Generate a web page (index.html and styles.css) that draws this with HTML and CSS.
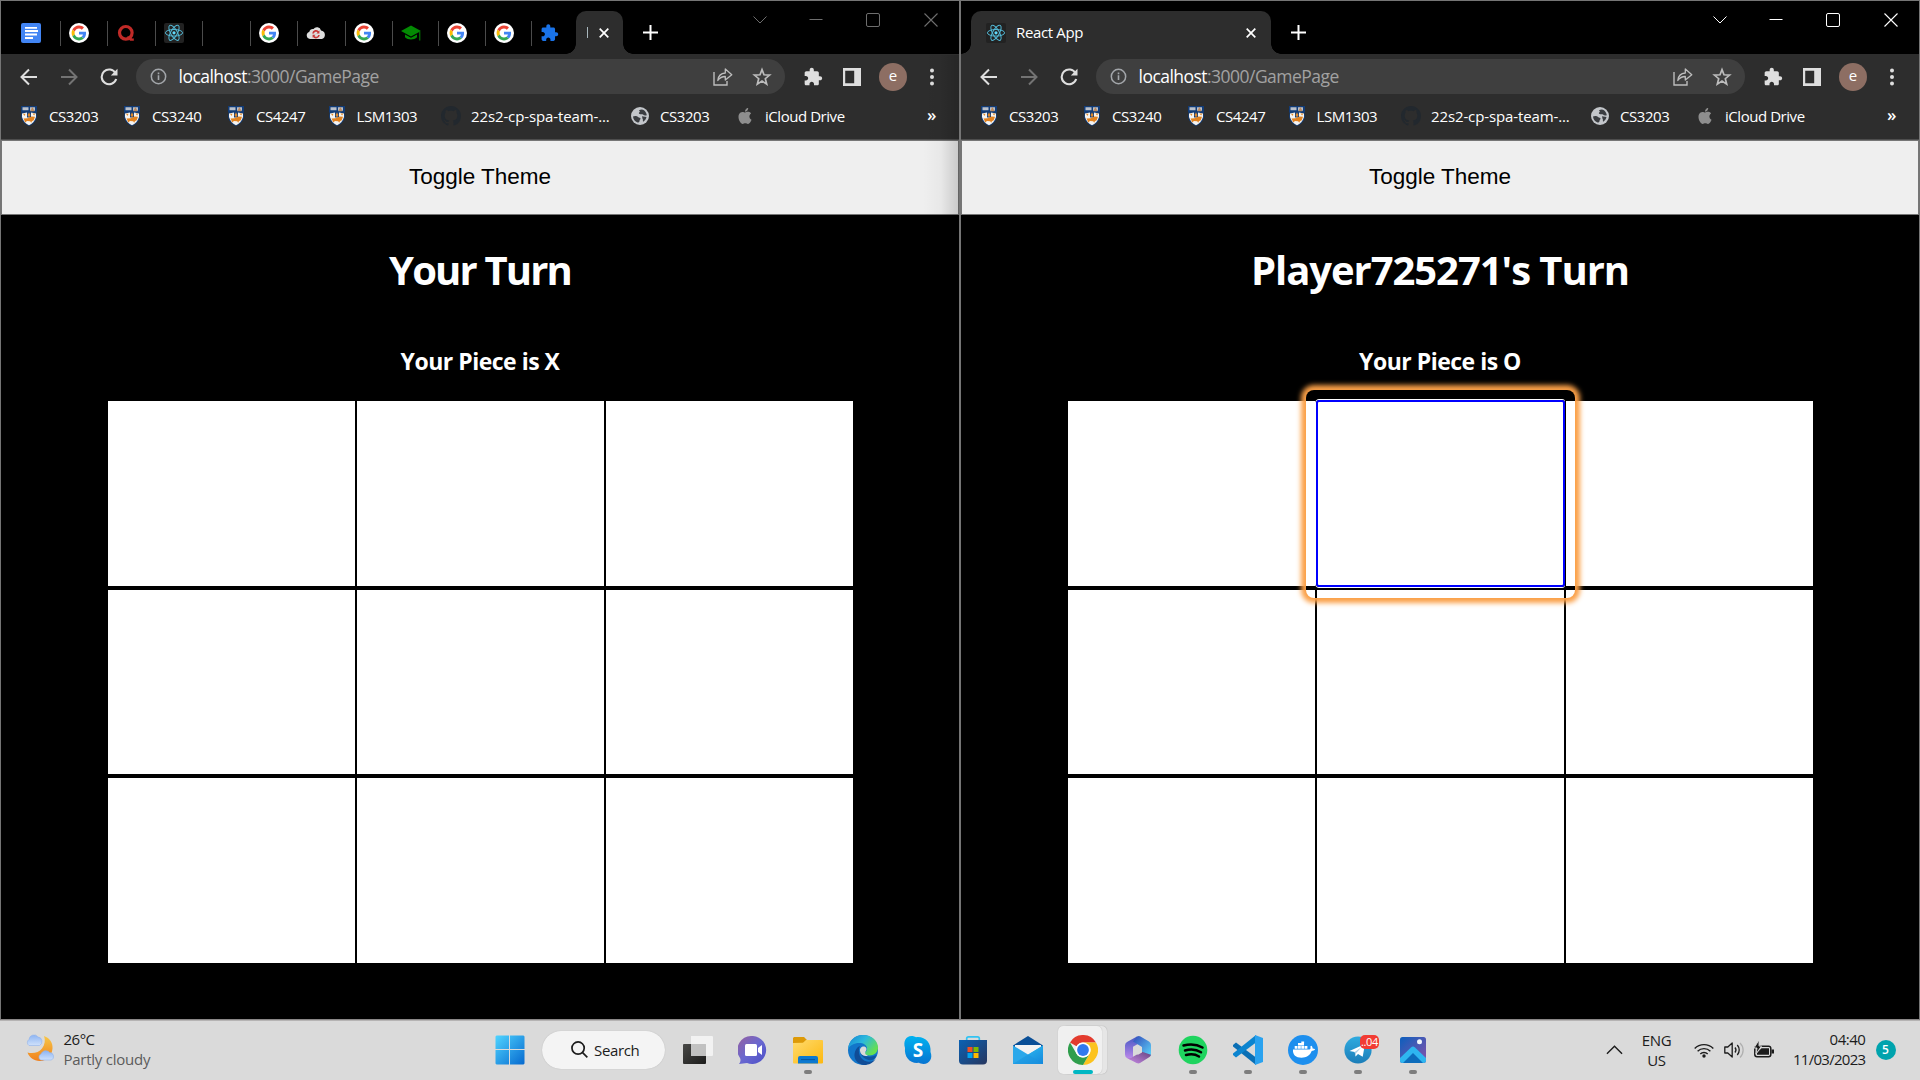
FILE: index.html
```html
<!DOCTYPE html>
<html lang="en">
<head>
<meta charset="utf-8">
<title>React App</title>
<link rel="stylesheet" href="styles.css">
</head>
<body>
<svg class="sprite" aria-hidden="true">
  <defs>
    <linearGradient id="gWin" x1="0" y1="0" x2="1" y2="1"><stop offset="0" stop-color="#4fd4ff"/><stop offset="1" stop-color="#0669cf"/></linearGradient>
    <linearGradient id="gChat" x1="0" y1="0" x2="1" y2="1"><stop offset="0" stop-color="#96609f"/><stop offset=".5" stop-color="#6a68d0"/><stop offset="1" stop-color="#4c4fc8"/></linearGradient>
    <linearGradient id="gFold" x1="0" y1="0" x2="1" y2="1"><stop offset="0" stop-color="#ffdb6e"/><stop offset="1" stop-color="#fdb80f"/></linearGradient>
    <linearGradient id="gEdge" x1="0" y1="0" x2="1" y2=".6"><stop offset="0" stop-color="#1583d3"/><stop offset=".5" stop-color="#2cb9dd"/><stop offset="1" stop-color="#66e04d"/></linearGradient>
    <linearGradient id="gBlue" x1="0" y1="0" x2="0" y2="1"><stop offset="0" stop-color="#00b2f0"/><stop offset="1" stop-color="#0874d1"/></linearGradient>
    <linearGradient id="gStore" x1="0" y1="0" x2="1" y2="1"><stop offset="0" stop-color="#0a62b4"/><stop offset="1" stop-color="#27365f"/></linearGradient>
    <linearGradient id="gMail" x1="0" y1="0" x2="1" y2="1"><stop offset="0" stop-color="#35c6f5"/><stop offset="1" stop-color="#1488dc"/></linearGradient>
    <linearGradient id="gTask" x1="0" y1="0" x2="1" y2="1"><stop offset="0" stop-color="#484846"/><stop offset="1" stop-color="#1c1c1b"/></linearGradient>
    <linearGradient id="gPhoto" x1="0" y1="0" x2="1" y2="1"><stop offset="0" stop-color="#0b5fbd"/><stop offset="1" stop-color="#8a52aa"/></linearGradient>
    <linearGradient id="gMoon" x1="0" y1="0" x2="0" y2="1"><stop offset="0" stop-color="#f7c748"/><stop offset="1" stop-color="#f0801d"/></linearGradient>
    <linearGradient id="gCloud" x1="0" y1="0" x2="0" y2="1"><stop offset="0" stop-color="#8db4f2"/><stop offset="1" stop-color="#cfe1fb"/></linearGradient>
    <linearGradient id="gTg" x1="0" y1="0" x2="0" y2="1"><stop offset="0" stop-color="#2fabe0"/><stop offset="1" stop-color="#1b7db8"/></linearGradient>
    <linearGradient id="gM1" x1="0" y1="0" x2="0" y2="1"><stop offset="0" stop-color="#4458c4"/><stop offset="1" stop-color="#c48bec"/></linearGradient>
    <linearGradient id="gM2" x1="0" y1="0" x2="1" y2="1"><stop offset="0" stop-color="#3149b9"/><stop offset="1" stop-color="#5fd6fb"/></linearGradient>
    <linearGradient id="gM3" x1="0" y1="1" x2="1" y2="0"><stop offset="0" stop-color="#c98be8"/><stop offset="1" stop-color="#66437f"/></linearGradient>
  </defs>
  <symbol id="docs" viewBox="0 0 20 20"><rect width="20" height="20" rx="2" fill="#4285f4"/><path d="M4 4.8h12M4 8h13M4 11.5h12M4 15h8" stroke="#fff" stroke-width="1.8"/></symbol>
  <symbol id="google" viewBox="0 0 20 20"><circle cx="10" cy="10" r="10" fill="#fff"/><g transform="translate(2.6 2.6) scale(.308)"><path fill="#EA4335" d="M24 9.5c3.54 0 6.71 1.22 9.21 3.6l6.85-6.85C35.9 2.38 30.47 0 24 0 14.62 0 6.51 5.38 2.56 13.22l7.98 6.19C12.43 13.72 17.74 9.5 24 9.5z"/><path fill="#4285F4" d="M46.98 24.55c0-1.57-.15-3.09-.38-4.55H24v9.02h12.94c-.58 2.96-2.26 5.48-4.78 7.18l7.73 6c4.51-4.18 7.09-10.36 7.09-17.65z"/><path fill="#FBBC05" d="M10.53 28.59c-.48-1.45-.76-2.99-.76-4.59s.27-3.14.76-4.59l-7.98-6.19C.92 16.46 0 20.12 0 24c0 3.88.92 7.54 2.56 10.78l7.97-6.19z"/><path fill="#34A853" d="M24 48c6.48 0 11.93-2.13 15.89-5.81l-7.73-6c-2.15 1.45-4.92 2.3-8.16 2.3-6.26 0-11.57-4.22-13.47-9.91l-7.98 6.19C6.51 42.62 14.62 48 24 48z"/></g></symbol>
  <symbol id="quora" viewBox="0 0 20 20"><circle cx="9.8" cy="9.8" r="6.3" fill="none" stroke="#c02a27" stroke-width="3.2"/><path d="M11 13.500l3 4.300h3.800v-2.600c-2 .6-2.500 0-3.800-2z" fill="#c02a27"/></symbol>
  <symbol id="react" viewBox="0 0 20 20"><rect width="20" height="20" rx="2" fill="#222"/><g fill="none" stroke="#53b9d6" stroke-width="1"><ellipse cx="10" cy="9.800" rx="8.600" ry="3.300"/><ellipse cx="10" cy="9.800" rx="8.600" ry="3.300" transform="rotate(60 10 9.800)"/><ellipse cx="10" cy="9.800" rx="8.600" ry="3.300" transform="rotate(120 10 9.800)"/></g><circle cx="10" cy="9.800" r="1.600" fill="#61dafb"/></symbol>
  <symbol id="cloudsync" viewBox="0 0 20 20"><path d="M4 16a3.600 3.600 0 0 1-.8-7A4 4 0 0 1 7.500 6a4.200 4.200 0 0 1 7.500 1.500 4.400 4.400 0 0 1 1 8.500z" fill="#dedede"/><path d="M7 10.500a3 3 0 0 1 5.500-1.300M13 12a3 3 0 0 1-5.500 1.200" fill="none" stroke="#c93a3a" stroke-width="1.700"/><path d="M13.400 7.500v3h-3zM6.600 14.800v-3h3z" fill="#c93a3a"/></symbol>
  <symbol id="cap" viewBox="0 0 20 20"><path d="M0 8l10-5.500L20 8l-10 5.500zM4 11.500l6 3.300 6-3.300v2.800c-3 3-9 3-12 0zM18.300 9h1v8.500h-1z" fill="#038a03"/></symbol>
  <symbol id="puzzle" viewBox="0 0 24 24"><path fill="currentColor" d="M20.5 11H19V7c0-1.1-.9-2-2-2h-4V3.500C13 2.120 11.880 1 10.500 1S8 2.120 8 3.500V5H4c-1.100 0-1.990.9-1.990 2v3.800H3.500c1.490 0 2.700 1.210 2.700 2.700s-1.210 2.700-2.700 2.700H2V20c0 1.100.9 2 2 2h3.800v-1.500c0-1.490 1.210-2.700 2.700-2.700s2.700 1.210 2.700 2.700V22H17c1.100 0 2-.9 2-2v-4h1.500c1.380 0 2.500-1.120 2.500-2.500S21.880 11 20.500 11z"/></symbol>
  <symbol id="x" viewBox="0 0 10 10"><path d="M.7.7l8.600 8.600M9.300.7L.7 9.300" stroke="#fff" stroke-width="1.700"/></symbol>
  <symbol id="plus" viewBox="0 0 15 15"><path d="M7.500 0v15M0 7.500h15" stroke="#fff" stroke-width="2"/></symbol>
  <symbol id="wchev" viewBox="0 0 14 14"><path d="M.5 3.500L7 10l6.500-6.500" fill="none" stroke="currentColor"/></symbol>
  <symbol id="wmin" viewBox="0 0 14 14"><path d="M.5 6.500h13" stroke="currentColor"/></symbol>
  <symbol id="wmax" viewBox="0 0 14 14"><rect x=".5" y=".5" width="13" height="13" rx="1.500" fill="none" stroke="currentColor"/></symbol>
  <symbol id="wclose" viewBox="0 0 14 14"><path d="M.5.5l13 13M13.500.5l-13 13" stroke="currentColor" stroke-width="1.100"/></symbol>
  <symbol id="back" viewBox="0 0 18 18"><path d="M17 9H2M9 1.500L1.500 9 9 16.500" fill="none" stroke="currentColor" stroke-width="2"/></symbol>
  <symbol id="reload" viewBox="0 0 18 18"><path d="M15.600 5.300A7.400 7.400 0 1 0 16.200 11" fill="none" stroke="#dedede" stroke-width="2.100"/><path d="M17.500.8v6.700h-6.700z" fill="#dedede"/></symbol>
  <symbol id="info" viewBox="0 0 18 18"><circle cx="9" cy="9" r="7.600" fill="none" stroke="#a3a6aa" stroke-width="1.600"/><path d="M9 7.800v5M9 4.700v1.800" stroke="#a3a6aa" stroke-width="1.700"/></symbol>
  <symbol id="share" viewBox="0 0 20 19"><path d="M1 5v13h13v-4" fill="none" stroke="#bdbdbd" stroke-width="1.400"/><path d="M4.800 13.500c.5-5 3.500-7.300 7.500-7.500V2l6.500 5.700-6.500 5.300V9.500c-3.500 0-5.500 1-7.500 4z" fill="none" stroke="#bdbdbd" stroke-width="1.300" stroke-linejoin="round"/></symbol>
  <symbol id="star" viewBox="0 0 20 20"><path d="M10 2.600l2 5.200 5.600.3-4.300 3.600 1.400 5.400L10 14.100l-4.700 3 1.400-5.400-4.300-3.600 5.600-.3z" fill="none" stroke="#bdbdbd" stroke-width="1.700"/></symbol>
  <symbol id="panel" viewBox="0 0 18 18"><path fill="#dedede" fill-rule="evenodd" d="M0 0h18v18H0zM2.200 2.800h9v12.400h-9z"/></symbol>
  <symbol id="dots" viewBox="0 0 4 18"><g fill="#dedede"><circle cx="2" cy="2.500" r="2"/><circle cx="2" cy="9" r="2"/><circle cx="2" cy="15.500" r="2"/></g></symbol>
  <symbol id="crest" viewBox="0 0 18 20"><path d="M1 0h16v6c-1 1-.5 2 0 4-.5 5-4 8.500-8 10-4-1.500-7.500-5-8-10 .5-2 1-3 0-4z" fill="#123c77"/><path d="M2.500 1.300h6v3h-6zM10 1.300h5v3.500h-5z" fill="#b9c0cb"/><path d="M12.400.7l2.200 4.500h-4.300z" fill="#bd8a5d"/><path d="M2 7.500l5-1h4l5 1V11c-1 4-4 7-7 8.300C6 18 3 15 2 11z" fill="#f4f3f1"/><path d="M7 6h4v5.500H7z" fill="#173e77"/><path d="M9 6.500l1.500 2.500L9 11.500 7.500 9z" fill="#e08a2c"/><path d="M3 7.800h2.500L4.500 10zM12.500 7.600h2.800l-1.200 2z" fill="#e08a2c"/><path d="M3.500 12.500l4-.2 4-1.800 3.500.2-1.300 3.500-1.800 1-.7 1.600-1-1.600-3.200-.3-2 1.500-.5-2z" fill="#e2821f"/></symbol>
  <symbol id="github" viewBox="0 0 16 16"><path fill="#22282e" d="M8 0C3.580 0 0 3.580 0 8c0 3.540 2.290 6.530 5.470 7.590.4.070.55-.17.55-.38 0-.19-.01-.82-.01-1.490-2.010.37-2.530-.49-2.690-.94-.09-.23-.48-.94-.82-1.130-.28-.15-.68-.52-.01-.53.63-.01 1.080.58 1.230.82.72 1.210 1.870.87 2.330.66.07-.52.28-.87.51-1.070-1.780-.2-3.640-.89-3.640-3.950 0-.87.31-1.590.82-2.150-.08-.2-.36-1.020.08-2.120 0 0 .67-.21 2.200.82.64-.18 1.320-.27 2-.27s1.360.09 2 .27c1.530-1.040 2.200-.82 2.200-.82.44 1.100.16 1.920.08 2.120.51.56.82 1.270.82 2.150 0 3.070-1.870 3.750-3.650 3.950.29.25.54.73.54 1.480 0 1.070-.01 1.930-.01 2.200 0 .21.15.46.55.38A8.010 8.010 0 0 0 16 8c0-4.420-3.580-8-8-8z"/></symbol>
  <symbol id="globe" viewBox="0 0 18 18"><circle cx="9" cy="9" r="9" fill="#c3c6ca"/><path d="M2 9.500c2-1 4-.5 5 .5s2.500.5 2.500 1.500-1 1.300-1 2.500-1 1.500-2 1.500C4 14.500 2.200 12.500 2 9.500zM8 3.200c2-1.200 4-.9 5 0 1.500 1.300 2.500 3 2.800 5-1.600.5-2.800.4-3.800-.6s-2.500 0-3.500-.5-.9-1.800.5-2zM11 9.200l4.500.8c-.5 2-1.500 3.500-3.300 4.700-.8-1.200.3-2-.7-3z" fill="#3a3d41"/></symbol>
  <symbol id="apple" viewBox="0 0 24 24"><path fill="#8e8e8e" d="M12.152 6.896c-.948 0-2.415-1.078-3.960-1.040-2.040.027-3.910 1.183-4.961 3.014-2.117 3.675-.546 9.103 1.519 12.090 1.013 1.454 2.208 3.090 3.792 3.039 1.520-.065 2.090-.987 3.935-.987 1.831 0 2.350.987 3.960.948 1.637-.026 2.676-1.480 3.676-2.948 1.156-1.688 1.636-3.325 1.662-3.415-.039-.013-3.182-1.221-3.220-4.857-.026-3.040 2.480-4.494 2.597-4.559-1.429-2.090-3.623-2.324-4.390-2.376-2-.156-3.675 1.090-4.610 1.090zM15.530 3.830c.843-1.012 1.400-2.427 1.245-3.830-1.207.052-2.662.805-3.532 1.818-.78.896-1.454 2.338-1.273 3.714 1.338.104 2.715-.688 3.559-1.701"/></symbol>
  <symbol id="weather" viewBox="0 0 30 28"><path d="M19 2c6 2 9 7 8.500 12.500C27 22 21 27.500 14.500 27 9 27 4 23 2.500 18.500 8 20 14 18.500 17 14.500S20.500 6 19 2z" fill="url(#gMoon)"/><path d="M4 11.500a3.600 3.600 0 0 1 0-6A5 5 0 0 1 13 3a4.500 4.500 0 0 1 1.500 8.500z" fill="url(#gCloud)" stroke="#8fb2ec" stroke-width=".6"/><path d="M15.500 26a3.400 3.400 0 0 1 .5-6 5 5 0 0 1 8.500-1.500 4 4 0 0 1 2 7.500z" fill="url(#gCloud)" stroke="#8fb2ec" stroke-width=".6"/></symbol>
  <symbol id="start" viewBox="0 0 30 30"><path d="M1.500.5H14V14H.5V1.500zM15 .5h13.500l1 1V14H15zM.5 15H14v14.500H1.500l-1-1zM15 15h14.500v13.500l-1 1H15z" fill="url(#gWin)"/></symbol>
  <symbol id="mag" viewBox="0 0 18 18"><circle cx="7.500" cy="7.500" r="6.500" fill="none" stroke="#1c1c1c" stroke-width="1.800"/><path d="M12.300 12.300l5 5" stroke="#1c1c1c" stroke-width="1.800"/></symbol>
  <symbol id="taskview" viewBox="0 0 30 30"><rect y="9" width="23" height="20" rx="1" fill="url(#gTask)"/><path d="M8 1h21a1 1 0 0 1 1 1v18a1 1 0 0 1-1 1H8z" fill="#f8f8f8" fill-opacity=".8"/><path d="M8 9h15v12H8z" fill="#b7b7b7" fill-opacity=".6"/></symbol>
  <symbol id="chat" viewBox="0 0 30 30"><path d="M15 1a14 14 0 1 1-6 27L1 29c1.500-2 2-4 1-6A14 14 0 0 1 15 1z" fill="url(#gChat)"/><rect x="7" y="9" width="12" height="12" rx="1.500" fill="#fff"/><path d="M20 13l4-3v10l-4-3z" fill="#fff"/></symbol>
  <symbol id="folder" viewBox="0 0 30 30"><path d="M1 2h10l3 3h14v8H0V3z" fill="#dd9a08"/><path d="M0 8l10-.3L13 5h16a1 1 0 0 1 1 1v21.500a1 1 0 0 1-1 1H1a1 1 0 0 1-1-1z" fill="url(#gFold)"/><path d="M5 28.500V23a2 2 0 0 1 2-2h16a2 2 0 0 1 2 2v5.500z" fill="#0d79d0"/><path d="M8 24.600h14" stroke="#09559e"/></symbol>
  <symbol id="edge" viewBox="0 0 30 30"><circle cx="15" cy="15" r="15" fill="#1276ca"/><path d="M0 14C1 5 7 0 15 0c9 0 15 6 15 12.500 0 5-4 8-8.500 8-3 0-4.800-1-4.800-2.200 0-1 2.300-1.500 2.300-4.800 0-3.500-3.500-5.500-8-5.500-5 0-9 2.500-11 6z" fill="url(#gEdge)"/><path d="M12 11c-3 6 0 14 7 15.500 4 .8 7-.5 9-3C25 28 21 30 16 30c-7-1-10-6-9.500-11C7 15 9 12 12 11z" fill="#104d97"/><path d="M13 12c-1.500 3-.5 6 2 8 3 2 7 2 11 1l2.500-1-1.500 3c-2 2.300-5 2.700-8 1.500-6-2-8-8-6-12.500z" fill="#0f549f"/><path d="M12 16c-.5-3 2-5 4.500-4.500 2 .5 2.500 2.500 1.500 4.200-1.500 2.300-1 3.800 2 4.700-4 1.500-7.500-.5-8-4.400z" fill="#dadada"/></symbol>
  <symbol id="skype" viewBox="0 0 30 30"><path d="M8.500 1c2 0 3.500.7 4.500 1.200C22 1 28.500 8 27.500 17c2.500 6-1 12-7 12-2 0-3.500-.5-4.500-1.200C7 29 1 22 2 13 0 6 3 1 8.500 1z" fill="url(#gBlue)"/><text x="15" y="21.500" text-anchor="middle" font-family="Open Sans, sans-serif" font-weight="700" font-size="19" fill="#fff">S</text></symbol>
  <symbol id="store" viewBox="0 0 30 30"><path d="M8.700 7V3.500c0-1 .6-1.700 1.700-1.700h9.200c1.100 0 1.700.7 1.700 1.700V7" fill="none" stroke="#33c3f2" stroke-width="1.700"/><path d="M1 5h28v20.500a4 4 0 0 1-4 4H5a4 4 0 0 1-4-4z" fill="url(#gStore)"/><path d="M9.500 12h5v5h-5z" fill="#f25022"/><path d="M15.500 12h5v5h-5z" fill="#7fba00"/><path d="M9.500 18h5v5h-5z" fill="#00a4ef"/><path d="M15.500 18h5v5h-5z" fill="#ffb900"/></symbol>
  <symbol id="mail" viewBox="0 0 30 30"><path d="M0 10.500L15 1l15 9.500V16H0z" fill="#0a4f97"/><path d="M2 10h26v8L15 25 2 18z" fill="#f3f3f3"/><path d="M0 10.500l15 9 15-9V29H0z" fill="#2ba8ea"/><path d="M0 29l30-18.500V29z" fill="url(#gMail)"/><path d="M15 19.500L30 29H0z" fill="#1c93e0" opacity=".5"/></symbol>
  <symbol id="chrome" viewBox="0 0 30 30"><path d="M2 7.500A15 15 0 0 1 28 7.500H15a7.500 7.500 0 0 0-6.500 3.800z" fill="#e33b2e"/><path d="M28 7.500A15 15 0 0 1 15 30l6.500-11.300A7.500 7.500 0 0 0 21 10l-6-2.500z" fill="#fcc31e"/><path d="M2 7.500A15 15 0 0 0 15 30l6.500-11.300a7.500 7.500 0 0 1-13 0z" fill="#2f9e4c"/><circle cx="15" cy="15" r="7.500" fill="#fff"/><circle cx="15" cy="15" r="5.900" fill="#3079ee"/></symbol>
  <symbol id="m365" viewBox="0 0 30 30"><path d="M14 1.500L4 7q-2 1.200-2 3.500v9q0 2.300 2 3.500l4 2.200q2-1.200 2-3.500v-10l7-4z" fill="url(#gM1)"/><path d="M14 1.500q2-.8 3.500 0L26 6.500q2 1.200 2 3.500v9.500q0 1.500-1.500 2L19 17v-5L10 6.500z" fill="url(#gM2)"/><path d="M26.500 22L17 28q-1.500.8-3.500 0L4 23q3.500 1 6-1.300l9-5 9 3q-.3 1.500-1.500 2.300z" fill="url(#gM3)"/><path d="M15 10.500l4 2.300v4.600l-4 2.300-4-2.300v-4.600z" fill="#dadada"/></symbol>
  <symbol id="spotify" viewBox="0 0 30 30"><circle cx="15" cy="15" r="14.300" fill="#1fd45f"/><path d="M5.500 10.500c6.500-1.800 13.500-1.200 19 2M7 15.500c5.500-1.500 11.500-1 16 1.800M8 20c4.500-1.200 9.500-.8 13 1.500" fill="none" stroke="#000" stroke-width="2.500" stroke-linecap="round"/></symbol>
  <symbol id="vscode" viewBox="0 0 30 30"><path d="M0 10l3-2.500 20 15V30L0 11.500z" fill="#0a6fb5"/><path d="M0 20l3 2.500 20-15V0L0 18.500z" fill="#0b84cf"/><path d="M22 0l8 3v24l-8 3z" fill="#2aa2ef"/></symbol>
  <symbol id="docker" viewBox="0 0 30 30"><circle cx="15" cy="15" r="15" fill="#1d8fee"/><path d="M5 14.500h16.500c1.500-.3 1-2 .8-3l1-.7c1 .8 1.300 1.700 1.300 2.700 1 0 2 .2 2.600.8-.8 1.300-2 1.700-3.500 1.700C22 20.500 18.500 22.700 13.500 22.700 8 22.700 4.500 20 5 14.500z" fill="#fff"/><path d="M6.700 11h2.800v2.800H6.700zM10 11h2.800v2.800H10zM13.300 11h2.800v2.800h-2.800zM16.600 11h2.800v2.800h-2.800zM10 8h6v2.500h-6zM13.300 6.500h2.800v2h-2.800z" fill="#fff"/></symbol>
  <symbol id="telegram" viewBox="0 0 30 30"><circle cx="15" cy="15" r="13.600" fill="url(#gTg)"/><path d="M6.500 16L22 9l-2.300 12.800L15 19l-2.500 2.500-.8-4.500z" fill="#fff"/><path d="M11.700 17l7-5-5.500 6-.7 3.500z" fill="#a9cfe5"/></symbol>
  <symbol id="photos" viewBox="0 0 30 30"><rect x="2" y="2" width="26" height="26" rx="2.500" fill="url(#gPhoto)"/><circle cx="21.500" cy="6.800" r="2.500" fill="#f1f6fc"/><path d="M2 23l11-10.500q2-1.800 4 0L28 23v2.500a2.500 2.500 0 0 1-2.500 2.500h-21A2.500 2.500 0 0 1 2 25.500z" fill="#2eb6f0"/><path d="M5 28l10-10 10 10z" fill="#0d6cbb"/></symbol>
  <symbol id="up" viewBox="0 0 18 10"><path d="M1 9l8-8 8 8" fill="none" stroke="#1c1c1c" stroke-width="1.500"/></symbol>
  <symbol id="wifi" viewBox="0 0 20 16"><g fill="none" stroke="#1c1c1c" stroke-width="1.400"><path d="M.7 6.500a13 13 0 0 1 18.600 0M3.600 9.300a9 9 0 0 1 12.800 0M6.300 12a5.300 5.300 0 0 1 7.400 0"/></g><circle cx="10" cy="14" r="1.700" fill="#1c1c1c"/></symbol>
  <symbol id="sound" viewBox="0 0 20 18"><g fill="none" stroke="#1c1c1c" stroke-width="1.300"><path d="M.8 6v6h3l4.400 4V2L3.800 6z" stroke-linejoin="round"/><path d="M11 6.500a4 4 0 0 1 0 5M13.300 4a7.500 7.500 0 0 1 0 10"/><path d="M16 2a10 10 0 0 1 0 14.500" stroke="#b0b0b0"/></g></symbol>
  <symbol id="battery" viewBox="0 0 20 18"><rect x=".8" y="5.300" width="16" height="10.500" rx="2.200" fill="none" stroke="#1c1c1c" stroke-width="1.500"/><path d="M7.500 7.300H15v6.500H3v-2z" fill="#1c1c1c"/><path d="M17.500 8.500H20v4h-2.500z" fill="#1c1c1c"/><path d="M5-1L0 7h3l-1 6 5.500-8H5z" fill="#1c1c1c" stroke="#dadada" stroke-width=".9"/></symbol>
</svg>

<div class="desktop">
  <section class="window inactive">
    <header class="tabstrip">
      <div class="tabs">
        <div class="tab"><svg><use href="#docs"/></svg></div>
        <div class="tab"><svg><use href="#google"/></svg></div>
        <div class="tab"><svg><use href="#quora"/></svg></div>
        <div class="tab"><svg><use href="#react"/></svg></div>
        <div class="tab"></div>
        <div class="tab"><svg><use href="#google"/></svg></div>
        <div class="tab"><svg><use href="#cloudsync"/></svg></div>
        <div class="tab"><svg><use href="#google"/></svg></div>
        <div class="tab tight"><svg><use href="#cap"/></svg></div>
        <div class="tab tight"><svg><use href="#google"/></svg></div>
        <div class="tab tight"><svg><use href="#google"/></svg></div>
        <div class="tab last"><svg class="ext"><use href="#puzzle"/></svg></div>
      </div>
      <div class="active-tab narrow"><i class="sliver"></i><svg class="x"><use href="#x"/></svg></div>
      <svg class="plus"><use href="#plus"/></svg>
      <div class="controls"><span class="c-chev"><svg><use href="#wchev"/></svg></span><span><svg><use href="#wmin"/></svg></span><span><svg><use href="#wmax"/></svg></span><span><svg><use href="#wclose"/></svg></span></div>
    </header>
    <nav class="toolbar">
      <span class="nav"><svg><use href="#back"/></svg></span>
      <span class="nav fwd"><svg><use href="#back"/></svg></span>
      <span class="nav"><svg><use href="#reload"/></svg></span>
      <div class="omnibox"><svg class="info"><use href="#info"/></svg><span class="url">localhost<em>:3000/GamePage</em></span><svg class="share"><use href="#share"/></svg><svg class="star"><use href="#star"/></svg></div>
      <svg class="pz"><use href="#puzzle"/></svg><svg class="panel"><use href="#panel"/></svg><span class="avatar">e</span><svg class="dots"><use href="#dots"/></svg>
    </nav>
    <nav class="bookmarks">
      <a><svg class="crest"><use href="#crest"/></svg>CS3203</a><a><svg class="crest"><use href="#crest"/></svg>CS3240</a><a><svg class="crest"><use href="#crest"/></svg>CS4247</a><a class="lsm"><svg class="crest"><use href="#crest"/></svg>LSM1303</a><a class="gh"><svg><use href="#github"/></svg>22s2-cp-spa-team-...</a><a><svg class="globe"><use href="#globe"/></svg>CS3203</a><a><svg class="apple"><use href="#apple"/></svg>iCloud Drive</a><b>»</b>
    </nav>
    <main>
      <button class="theme">Toggle Theme</button>
      <h1>Your Turn</h1>
      <h3>Your Piece is X</h3>
      <div class="board"><i></i><i></i><i></i><i></i><i></i><i></i><i></i><i></i><i></i></div>
    </main>
  </section>

  <section class="window">
    <header class="tabstrip">
      <div class="active-tab wide"><svg class="fav"><use href="#react"/></svg><span class="tab-title">React App</span><svg class="x"><use href="#x"/></svg></div>
      <svg class="plus"><use href="#plus"/></svg>
      <div class="controls"><span class="c-chev"><svg><use href="#wchev"/></svg></span><span><svg><use href="#wmin"/></svg></span><span><svg><use href="#wmax"/></svg></span><span><svg><use href="#wclose"/></svg></span></div>
    </header>
    <nav class="toolbar">
      <span class="nav"><svg><use href="#back"/></svg></span>
      <span class="nav fwd"><svg><use href="#back"/></svg></span>
      <span class="nav"><svg><use href="#reload"/></svg></span>
      <div class="omnibox"><svg class="info"><use href="#info"/></svg><span class="url">localhost<em>:3000/GamePage</em></span><svg class="share"><use href="#share"/></svg><svg class="star"><use href="#star"/></svg></div>
      <svg class="pz"><use href="#puzzle"/></svg><svg class="panel"><use href="#panel"/></svg><span class="avatar">e</span><svg class="dots"><use href="#dots"/></svg>
    </nav>
    <nav class="bookmarks">
      <a><svg class="crest"><use href="#crest"/></svg>CS3203</a><a><svg class="crest"><use href="#crest"/></svg>CS3240</a><a><svg class="crest"><use href="#crest"/></svg>CS4247</a><a class="lsm"><svg class="crest"><use href="#crest"/></svg>LSM1303</a><a class="gh"><svg><use href="#github"/></svg>22s2-cp-spa-team-...</a><a><svg class="globe"><use href="#globe"/></svg>CS3203</a><a><svg class="apple"><use href="#apple"/></svg>iCloud Drive</a><b>»</b>
    </nav>
    <main>
      <button class="theme">Toggle Theme</button>
      <h1 class="player">Player725271's Turn</h1>
      <h3>Your Piece is O</h3>
      <div class="board"><i></i><i class="focused"></i><i></i><i></i><i></i><i></i><i></i><i></i><i></i></div>
    </main>
  </section>
</div>

<footer class="taskbar">
  <div class="weather"><svg><use href="#weather"/></svg><p><span class="temp">26°C</span><span class="cond">Partly cloudy</span></p></div>
  <svg class="start"><use href="#start"/></svg>
  <div class="search"><svg><use href="#mag"/></svg><span>Search</span></div>
  <div class="apps">
    <span><svg><use href="#taskview"/></svg></span>
    <span><svg><use href="#chat"/></svg></span>
    <span class="run"><svg><use href="#folder"/></svg></span>
    <span><svg><use href="#edge"/></svg></span>
    <span><svg><use href="#skype"/></svg></span>
    <span><svg><use href="#store"/></svg></span>
    <span><svg><use href="#mail"/></svg></span>
    <span class="run current"><svg><use href="#chrome"/></svg></span>
    <span><svg><use href="#m365"/></svg></span>
    <span class="run"><svg><use href="#spotify"/></svg></span>
    <span class="run"><svg><use href="#vscode"/></svg></span>
    <span class="run"><svg><use href="#docker"/></svg></span>
    <span class="run"><svg><use href="#telegram"/></svg><b class="badge">..04</b></span>
    <span class="run"><svg><use href="#photos"/></svg></span>
  </div>
  <div class="tray">
    <svg class="up"><use href="#up"/></svg>
    <p class="lang"><span>ENG</span><span>US</span></p>
    <svg class="wifi"><use href="#wifi"/></svg>
    <svg class="sound"><use href="#sound"/></svg>
    <svg class="battery"><use href="#battery"/></svg>
    <p class="clock"><span class="time">04:40</span><span class="date">11/03/2023</span></p>
    <b class="count">5</b>
  </div>
</footer>
</body>
</html>
```
FILE: styles.css
```css
* { box-sizing: border-box; }
body { margin: 0; width: 1920px; height: 1080px; overflow: hidden; background: #000; font-family: "Open Sans", "Noto Sans", sans-serif; }
svg { display: block; flex: none; overflow: visible; }
.sprite { position: absolute; width: 0; height: 0; }
p, h1, h3 { margin: 0; }
i, em { font-style: normal; }

.desktop { display: flex; height: 1020px; }
.window { position: relative; width: 960px; height: 1020px; border: 1px solid #757575; border-bottom-color: #8a8787; background: #000; color: #fff; }
.inactive::after { content: ""; position: absolute; right: 0; top: 54px; width: 36px; height: 160px; background: linear-gradient(to right, transparent, rgba(0, 0, 0, .03) 50%, rgba(0, 0, 0, .16)); }

/* tab strip */
.tabstrip { display: flex; height: 53px; padding-left: 12px; }
.tabs { display: flex; align-items: center; width: 563px; padding-top: 11px; }
.tab { flex: 0 0 47.500px; display: flex; align-items: center; height: 25px; padding-left: 8px; border-right: 1px solid #4b4b4b; }
.tab.tight { flex-basis: 46.400px; }
.tab svg { width: 20px; height: 20px; }
.tab.last { flex-basis: 40px; border: 0; }
.tab .ext { width: 19px; color: #1a73e8; }
.active-tab { position: relative; display: flex; align-items: center; height: 43px; margin-top: 10px; border-radius: 10px 10px 0 0; background: #2d2d2d; }
.active-tab::before, .active-tab::after { content: ""; position: absolute; bottom: 0; width: 10px; height: 10px; }
.active-tab::before { right: 100%; background: radial-gradient(circle at 0 0, transparent 9.500px, #2d2d2d 10px); }
.active-tab::after { left: 100%; background: radial-gradient(circle at 100% 0, transparent 9.500px, #2d2d2d 10px); }
.narrow { width: 47px; padding-left: 11px; }
.sliver { width: 1px; height: 11px; background: #a9b7bd; }
.narrow .x { margin-left: 11px; }
.x { width: 10px; height: 10px; }
.wide { width: 300px; margin-left: -2px; padding: 0 15px; }
.fav { width: 20px; height: 20px; }
.tab-title { flex: 1; margin-left: 10px; padding-bottom: 2px; font-size: 15px; letter-spacing: -.35px; }
.plus { width: 15px; height: 15px; margin: 24px 0 0 20px; }
.controls { display: flex; margin-left: auto; color: #fff; }
.controls span { width: 57.500px; padding: 12px 0 0 22px; }
.controls .c-chev { padding-left: 23.500px; }
.controls svg { width: 14px; height: 14px; }
.inactive .controls { color: #6e6e6e; }

/* toolbar */
.toolbar { display: flex; align-items: center; height: 43px; padding: 2px 0 0 7.500px; background: #2d2d2d; }
.nav { width: 40px; display: flex; justify-content: center; color: #dedede; }
.nav svg { width: 18px; height: 18px; }
.fwd { color: #737373; }
.fwd svg { transform: scaleX(-1); }
.omnibox { display: flex; align-items: center; width: 649px; height: 35px; margin-left: 7.500px; padding: 0 13px 0 14px; border-radius: 18px; background: #3f3f3f; }
.info { width: 17px; height: 17px; }
.url { flex: 1; margin-left: 11.500px; font-size: 17.500px; letter-spacing: -.53px; line-height: 33px; }
.url em { color: #a2a2a2; }
.share { width: 20px; height: 19px; margin-right: 19px; }
.star { width: 20px; height: 20px; }
.pz { width: 20px; height: 20px; margin-left: 18px; color: #dedede; }
.panel { width: 18px; height: 18px; margin-left: 20px; }
.avatar { width: 28px; height: 28px; margin-left: 18px; border-radius: 50%; background: #8d6e63; font-size: 15px; line-height: 25px; text-align: center; }
.dots { width: 4px; height: 18px; margin-left: 23px; }

/* bookmarks */
.bookmarks { display: grid; grid-template-columns: 103px 104px 100.500px 113.500px 190px 105px 191px 20px; align-items: center; height: 43px; padding: 0 0 4px 19px; border-bottom: 1px solid #4d4d4d; background: #2d2d2d; font-size: 15px; letter-spacing: -.45px; white-space: nowrap; }
.bookmarks a { display: flex; align-items: center; gap: 11px; }
.bookmarks svg { width: 18px; height: 20px; }
.bookmarks .gh { gap: 10px; letter-spacing: -.12px; }
.bookmarks .gh svg { width: 20px; }
.bookmarks .globe { height: 18px; }
.bookmarks .apple { height: 16px; }
.bookmarks b { font-weight: 600; font-size: 17px; line-height: 18px; padding-bottom: 2px; }

/* game page */
.theme { display: block; width: 100%; height: 75px; padding: 0 0 1px; border: 1px solid #767676; border-radius: 0; background: #efefef; color: #000; font: 22.500px "Liberation Sans", Arial, sans-serif; }
h1 { margin-top: 27px; font-size: 40px; line-height: 56px; text-align: center; font-weight: 700; letter-spacing: -1.850px; }
h1.player { letter-spacing: -1.050px; }
h3 { margin-top: 47px; height: 56px; font-size: 23px; line-height: 32px; text-align: center; font-weight: 700; letter-spacing: -.5px; }
.board { display: grid; grid-template-columns: repeat(3, 247px); grid-template-rows: 185px 184px 185px; gap: 4px 2px; width: 745px; margin-left: 107px; }
.board i { background: #fff; }
.focused { position: relative; }
.focused::before { content: ""; position: absolute; left: -1px; right: -1px; top: -1px; bottom: -1px; border: 2px solid #00f; border-radius: 3px; box-shadow: -1px 0 #fff, 0 -1px #fff, 0 1px #fff; }
.focused::after { content: ""; position: absolute; z-index: 2; left: -11px; right: -11px; top: -11px; bottom: -12px; border-radius: 8px; box-shadow: 0 0 5px 5px #fba047; }

/* taskbar */
.taskbar { display: flex; align-items: center; height: 60px; padding-bottom: 2px; border-top: 1px solid #b5b3b3; background: #dadada; color: #1c1c1c; font-size: 15px; line-height: 20px; }
.weather { display: flex; width: 494.500px; padding: 0 0 2px 24.500px; }
.weather svg { width: 30px; height: 28px; margin-top: 5px; }
.weather p { margin-left: 9px; }
.weather span, .tray p span { display: block; }
.temp { letter-spacing: -.5px; }
.cond { color: #5c5c5c; letter-spacing: -.25px; }
.start { width: 30px; height: 30px; }
.search { display: flex; align-items: center; width: 123px; height: 38px; margin-left: 17.500px; padding-left: 28.500px; border-radius: 19px; background: #f4f4f4; box-shadow: 0 0 1px #aaa; letter-spacing: -.35px; }
.search svg { width: 17px; height: 17px; margin-right: 6.500px; }
.apps { display: flex; margin-left: 5px; }
.apps span { position: relative; display: flex; align-items: center; justify-content: center; width: 55px; height: 48px; }
.apps svg { position: relative; width: 30px; height: 30px; }
.run::after { content: ""; position: absolute; left: 24px; bottom: 0; width: 8px; height: 4px; border-radius: 2px; background: #7d7d7d; }
.current::before { content: ""; position: absolute; left: 3px; top: 0; width: 44px; height: 48px; border-radius: 5px; background: #f0f0f0; box-shadow: 0 0 1px #aaa, 5px 0 #e6e6e6, 5px 0 1px #999; }
.current::after { left: 17.500px; width: 20px; background: #00b7c3; }
.badge { position: absolute; left: 30px; top: 9px; width: 19px; height: 14px; border-radius: 5px; background: #f23c34; color: #fff; font-weight: 400; font-size: 11px; line-height: 14px; letter-spacing: -.4px; text-align: center; }
.tray { display: flex; align-items: center; margin-left: 165.500px; }
.up { width: 17px; height: 10px; }
.lang { width: 40px; margin-left: 14px; text-align: center; letter-spacing: -.3px; }
.wifi { width: 20px; height: 16px; margin-left: 17px; }
.sound { width: 20px; height: 18px; margin-left: 10px; }
.battery { width: 20px; height: 18px; margin-left: 10px; }
.clock { width: 92px; padding-bottom: 2px; text-align: right; white-space: nowrap; letter-spacing: -.45px; }
.date { letter-spacing: -.7px; }
.count { width: 20px; height: 20px; margin-left: 10px; border-radius: 50%; background: #00a3ad; color: #fff; font-size: 12px; font-weight: 600; line-height: 20px; text-align: center; }
```
